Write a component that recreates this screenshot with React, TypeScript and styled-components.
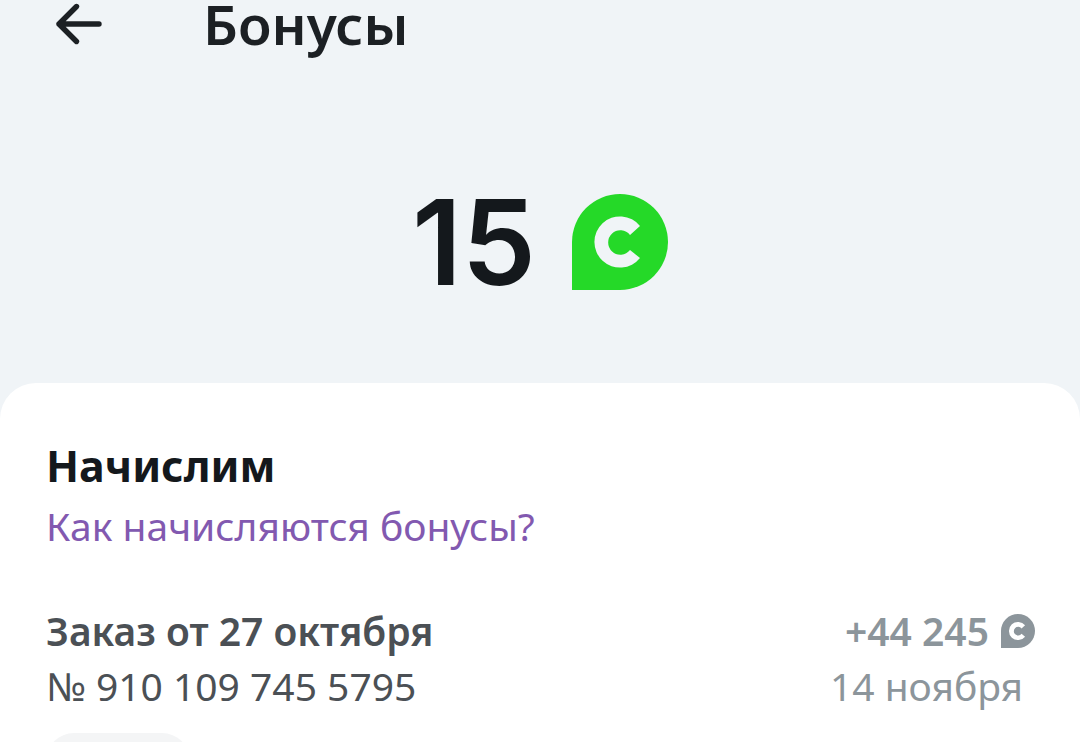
import React from "react";
import styled, { createGlobalStyle } from "styled-components";

const GlobalStyle = createGlobalStyle`
  *, *::before, *::after { box-sizing: border-box; }
  body {
    margin: 0;
    background: #f0f4f7;
    font-family: "Noto Sans", "Open Sans", sans-serif;
  }
  h1, h2, p { margin: 0; }
`;

const Page = styled.div`
  height: 100vh;
  display: flex;
  flex-direction: column;
  overflow: hidden;
`;

const TopBar = styled.header`
  display: flex;
  align-items: center;
  gap: 99px;
  height: 48px;
  padding: 0 52px;
`;

const BackButton = styled.button`
  display: flex;
  padding: 0;
  border: 0;
  background: none;
  color: #1c2024;
  cursor: pointer;
`;

const Title = styled.h1`
  font-size: 55px;
  line-height: 46px;
  font-weight: 600;
  color: #1c2024;
`;

const Balance = styled.section`
  display: flex;
  justify-content: center;
  align-items: center;
  gap: 36px;
  padding: 144px 0 91px;
`;

const BalanceValue = styled.span`
  font-family: "Inter", "Noto Sans", sans-serif;
  font-size: 118px;
  line-height: 100px;
  font-weight: 600;
  color: #14181c;
`;

const Sheet = styled.main`
  flex: 1 0 auto;
  padding: 55px 45px 0 46px;
  border-radius: 36px 36px 0 0;
  background: #fff;
`;

const SheetTitle = styled.h2`
  font-size: 43px;
  line-height: 56px;
  font-weight: 700;
  color: #14181c;
`;

const HelpLink = styled.a`
  display: inline-block;
  font-size: 39px;
  line-height: 64px;
  color: #8259b0;
  text-decoration: none;
`;

const Order = styled.article`
  display: flex;
  justify-content: space-between;
  margin-top: 45px;
  font-size: 39px;
  line-height: 55px;
`;

const OrderInfo = styled.div`
  color: #4b5055;
`;

const Accrual = styled.div`
  display: flex;
  flex-direction: column;
  align-items: flex-end;
  color: #8c959b;
`;

const Strong = styled.p`
  font-weight: 600;
`;

const Amount = styled(Strong)`
  display: flex;
  align-items: center;
  gap: 12px;
`;

const AccrualDate = styled.p`
  padding-right: 12px;
`;

const Chip = styled.div`
  width: 144px;
  height: 56px;
  margin-top: 20px;
  border-radius: 28px;
  background: #f4f5f6;
`;

function BonusIcon({ size, color, cut }: { size: number; color: string; cut: string }) {
  return (
    <svg width={size} height={size} viewBox="0 0 96 96" aria-hidden="true">
      <path d="M0 96V48A48 48 0 1 1 48 96Z" fill={color} />
      <path
        d="M68 32A25.6 25.6 0 1 0 68 64L58 56A12.2 12.2 0 1 1 58 41Z"
        fill={cut}
      />
    </svg>
  );
}

function BackIcon() {
  return (
    <svg
      width="52"
      height="48"
      viewBox="0 0 52 48"
      fill="none"
      stroke="currentColor"
      strokeWidth="5.4"
      strokeLinecap="round"
      strokeLinejoin="round"
      aria-hidden="true"
    >
      <path d="M47 24H7M24.5 6.5L7 24L24.5 41.5" />
    </svg>
  );
}

export default function App() {
  return (
    <>
      <GlobalStyle />
      <Page>
        <TopBar>
          <BackButton type="button" aria-label="Назад">
            <BackIcon />
          </BackButton>
          <Title>Бонусы</Title>
        </TopBar>
        <Balance>
          <BalanceValue>15</BalanceValue>
          <BonusIcon size={96} color="#25d928" cut="#f0f4f7" />
        </Balance>
        <Sheet>
          <SheetTitle>Начислим</SheetTitle>
          <HelpLink href="#bonus-rules">Как начисляются бонусы?</HelpLink>
          <Order>
            <OrderInfo>
              <Strong>Заказ от 27 октября</Strong>
              <p>№ 910 109 745 5795</p>
            </OrderInfo>
            <Accrual>
              <Amount>
                +44 245
                <BonusIcon size={34} color="#8c959b" cut="#fff" />
              </Amount>
              <AccrualDate>14 ноября</AccrualDate>
            </Accrual>
          </Order>
          <Chip />
        </Sheet>
      </Page>
    </>
  );
}
